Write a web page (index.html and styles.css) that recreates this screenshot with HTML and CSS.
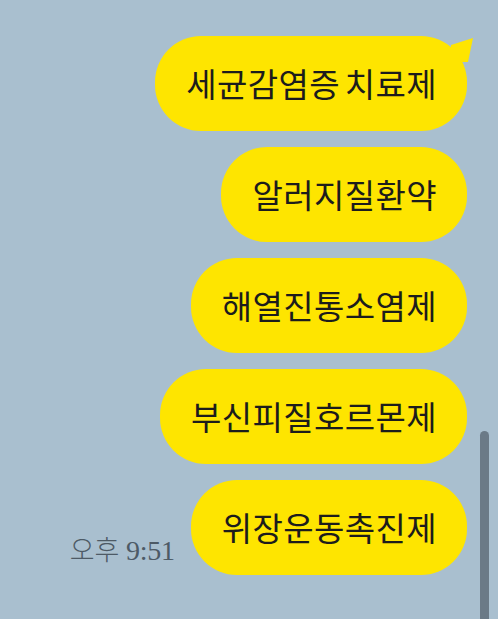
FILE: index.html
```html
<!DOCTYPE html>
<html lang="ko">
<head>
    <meta charset="UTF-8">
    <meta name="viewport" content="width=device-width, initial-scale=1.0">
    <title>채팅</title>
    <link rel="stylesheet" href="styles.css">
</head>
<body>
    <div class="chat">
        <div class="row">
            <div class="bubble first">세균감염증 치료제</div>
        </div>
        <div class="row">
            <div class="bubble">알러지질환약</div>
        </div>
        <div class="row">
            <div class="bubble">해열진통소염제</div>
        </div>
        <div class="row">
            <div class="bubble">부신피질호르몬제</div>
        </div>
        <div class="row">
            <span class="time"><span class="ampm">오후</span> 9:51</span>
            <div class="bubble">위장운동촉진제</div>
        </div>
    </div>
    <div class="scrollbar"></div>
</body>
</html>
```

FILE: styles.css
```css
html, body {
    margin: 0;
    height: 100%;
}
body {
    background-color: #a9bfcf;
    font-family: "Noto Sans CJK KR", "Noto Sans", sans-serif;
    overflow: hidden;
    position: relative;
}
.chat {
    display: flex;
    flex-direction: column;
    gap: 16px;
    padding: 36px 31px 0 0;
}
.row {
    display: flex;
    justify-content: flex-end;
    align-items: flex-end;
    gap: 16px;
}
.bubble {
    position: relative;
    height: 95px;
    display: flex;
    align-items: center;
    padding: 0 30px 2px 31px;
    box-sizing: border-box;
    background-color: #fee500;
    border-radius: 46px;
    color: #1c1c1c;
    font-size: 33px;
    font-weight: 400;
    letter-spacing: 0.4px;
    word-spacing: -5px;
    white-space: nowrap;
}
.bubble.first::after {
    content: "";
    position: absolute;
    top: 2px;
    right: -6px;
    width: 22px;
    height: 24px;
    background-color: #fee500;
    clip-path: polygon(0 7px, 100% 0, 17px 100%, 0 100%);
}
.time {
    font-family: "Liberation Serif", "Noto Sans CJK KR", serif;
    font-size: 28px;
    color: #4d5a66;
    margin-bottom: 7px;
    letter-spacing: -0.3px;
}
.time .ampm {
    font-family: "Noto Sans CJK KR", sans-serif;
    font-weight: 300;
    font-size: 27px;
    letter-spacing: 0;
}
.scrollbar {
    position: absolute;
    left: 480px;
    top: 431px;
    width: 9px;
    height: 200px;
    background-color: #6b7a87;
    border-radius: 5px 5px 0 0;
}
```
